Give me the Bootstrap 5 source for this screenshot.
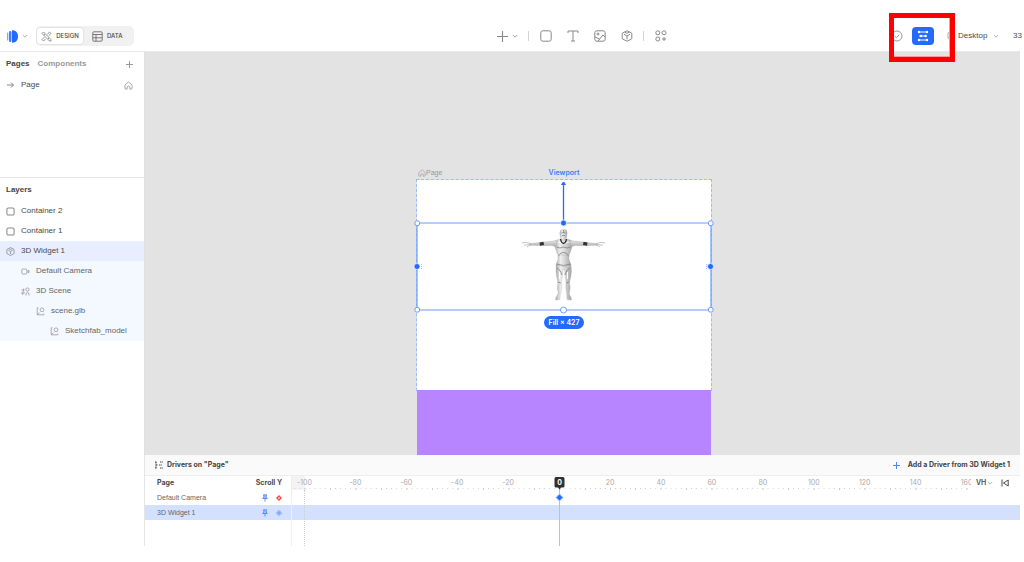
<!DOCTYPE html>
<html lang="en">
<head>
<meta charset="utf-8">
<meta name="viewport" content="width=device-width, initial-scale=1">
<title>Drivers on "Page"</title>
<link href="https://cdn.jsdelivr.net/npm/bootstrap@5.3.0/dist/css/bootstrap.min.css" rel="stylesheet">
<style>
  body { font-family: Inter, "Liberation Sans", sans-serif; font-size: 7px; line-height: 10px; color: #4a4a4a; background: #fff; }
  svg { display: block; flex: none; fill: none; stroke: currentColor; stroke-width: 1; }
  svg.solid { stroke: none; }
  svg.thin { stroke-width: .8; }
  svg.soft { color: #999; }
  svg.add { color: #4d85ff; }
  button, select { font: inherit; color: inherit; background: none; border: 0; padding: 0; }
  a { color: inherit; text-decoration: none; }
  select { appearance: none; }
  .plain { font-family: "Liberation Sans", sans-serif; font-size: 8px; }
  .app { min-height: 100vh; padding: 21px 4px 16px 0; }
  .topbar { display: grid; grid-template-columns: 144px 1fr auto 1fr; height: 31px; border-bottom: 1px solid #e8e8e8; }
  .brand { margin-left: 7px; }
  .modes { background: #f1f1f1; border-radius: 5px; height: 20px; width: 98px; font-size: 6px; font-weight: 500; }
  .modes button { height: 18px; color: #444; }
  .modes svg { color: #777; }
  .modes .active { width: 48px; background: #fff; border-radius: 4px; border: 1px solid #e2e2e2; }
  .tools { color: #888; }
  .tools button { margin-left: 15px; }
  .tools button:first-child { margin-left: 0; }
  .tools hr { width: 1px; height: 10px; margin: 0 -4px 0 10px; border: 0; background: #d4d4d4; opacity: 1; }
  .status { gap: 5px; }
  .drivers-btn { width: 22px; height: 18px; border-radius: 4px; background: #246bfd; color: #fff; }
  .callout { position: absolute; z-index: 5; inset: -14px -21px -17px -23px; border: 5px solid #f00; box-shadow: inset -1px -1px 0 #f99; pointer-events: none; }
  .zoom-level { width: 7px; margin-left: 9px; white-space: nowrap; }
  .side { width: 145px; border-right: 1px solid #e0e0e0; }
  .pages { height: 126px; border-bottom: 1px solid #e8e8e8; }
  .pages-head { padding: 7px 11px 6px 6px; }
  .strong { font-weight: 600; color: #444; }
  .faint { color: #999; }
  .layer { height: 20px; padding: 0 11px 0 6px; gap: 6px; }
  .layer svg { color: #888; }
  .picked { background: #e8eeff; }
  .child { background: #f4f8ff; color: #666; }
  .child svg { color: #999; }
  .lv1 { padding-left: 21px; } .lv2 { padding-left: 36px; } .lv3 { padding-left: 50px; }
  .canvas { background: #e3e3e3; }
  .artboard { position: absolute; left: 272px; top: 128px; bottom: 0; width: 294px; }
  .screen { height: 210px; background: #fff; outline: 1px dashed #9dbcff; }
  .purple { background: #b685ff; }
  .board-label { position: absolute; top: -12px; left: 1px; font-size: 7px; }
  .view-label { position: absolute; top: -12px; left: 0; right: 0; color: #3b7bff; font-weight: 600; }
  .scene { position: absolute; left: -5px; top: 0; }
  .size-tag { position: absolute; top: 136px; left: 127px; width: 40px; height: 13px; border-radius: 7px; background: #246bfd; color: #fff; font-weight: 600; }
  .panel { height: 91px; border-left: 1px solid #e5e5e5; margin-left: -1px; }
  .panel-head { height: 21px; background: #fafafa; border-bottom: 1px solid #eee; padding: 0 10px; font-weight: 700; color: #444; }
  .panel-body { height: 70px; }
  .names { width: 147px; border-right: 1px solid #eee; }
  .names table { width: 100%; border-collapse: collapse; }
  .names th, .names td { height: 15px; padding: 0; vertical-align: middle; }
  .names thead th { font-weight: 700; height: 14px; }
  .names tbody th { font-family: "Liberation Sans", sans-serif; font-weight: 400; color: #666; }
  .names th:first-child { padding-left: 12px; }
  .names th:last-child { text-align: right; padding-right: 9px; }
  .names .key { color: #4d85ff; width: 52px; padding-right: 9px; }
  .lane-on { background: #d3e0fe; }
  .lane { height: 15px; }
  .ruler { height: 14px; background: linear-gradient(90deg, #f3f3f3 13px, #fff 13px); clip-path: inset(0 0 -60px 0); position: relative; z-index: 1; }
  .ticks { display: grid; grid-template-columns: repeat(14, 1fr); margin: 0 28px 0 -13px; height: 15px; color: #aaa; }
  .ticks span { position: relative; text-align: center; padding-top: 2px; background: linear-gradient(90deg, #ccc 1px, transparent 1px) 0 12px / 10% 1px repeat-x, linear-gradient(90deg, #ccc 1px, transparent 1px) 0 12px / 50% 2px repeat-x; }
  .ticks .head { position: absolute; z-index: 2; left: 50%; top: 1px; margin-left: -5px; }
  .origin { position: absolute; left: 12px; top: 14px; bottom: 0; border-left: 1px dotted #ccc; }
  .needle { position: absolute; z-index: 1; left: 50%; top: 12px; height: 58px; width: 1px; background: #bcc0c8; }
  .units { position: absolute; z-index: 2; right: 0; top: 0; width: 49px; height: 14px; background: #fff; padding-left: 5px; }
  .units select { font-weight: 600; }
</style>
</head>
<body>
<svg width="0" height="0" class="position-absolute" aria-hidden="true">
  <symbol id="chev" viewBox="0 0 6 6"><path d="M.8 2 3 4.2 5.2 2" stroke-width=".8"/></symbol>
  <symbol id="plus" viewBox="0 0 10 10"><path d="M5 0v10M0 5h10"/></symbol>
  <symbol id="home" viewBox="0 0 10 10"><path d="M1 4.500 5 1l4 3.500V8q0 1-1 1H6.500V6.500Q5 5 3.500 6.500V9H2Q1 9 1 8z" stroke-width=".8"/></symbol>
  <symbol id="cube" viewBox="0 0 12 12"><path d="M6 .7 10.800 3.300v5.400L6 11.300 1.200 8.700V3.300zM3 4.200 6 6l3-1.800M6 6v3.500M3.800 2.200 6 3.300l2.200-1.100"/></symbol>
  <symbol id="box" viewBox="0 0 8 8"><rect x=".8" y=".8" width="6.400" height="6.400" rx="1.300" stroke-width=".9"/></symbol>
  <symbol id="mesh" viewBox="0 0 9 9"><path d="M2.500.8H1.200v7h6.600V6.500M1.200 7.800l2.200-2.200" stroke-width=".8"/><circle cx="6" cy="2.800" r="1.900" stroke-width=".8"/></symbol>
  <symbol id="pin" viewBox="0 0 6 8"><path d="M1.500.8h3L4 3l1.300 1.500H.7L2 3zM3 4.500v3" fill="#a9c3ff" stroke-width=".9"/></symbol>
</svg>

<div class="app d-flex flex-column">
  <header class="topbar">
    <div class="d-flex align-items-center">
      <button class="brand d-flex align-items-center" aria-label="Menu">
        <svg class="solid" width="11" height="13" viewBox="0 0 11 13"><path d="M5 .3c4 0 6 2.700 6 6.200s-2 6.200-6 6.200z" fill="#246bfd"/><rect x="2" y="1" width="2.400" height="11" rx="1.200" fill="#3f80ff"/><rect x="0" y="2.500" width="1.300" height="8" rx=".6" fill="#7ba8ff"/></svg>
        <svg width="6" height="6" class="soft ms-1 me-1"><use href="#chev"/></svg>
      </button>
      <div class="modes d-flex align-items-center ms-1">
        <button class="active d-flex align-items-center justify-content-center gap-1">
          <svg class="thin" width="11" height="11" viewBox="0 0 11 11"><path d="M1 2.500 2.500 1 10 8.500v1.500H8.500zM10 2.500 8.500 1 6.300 3.200M7.800 4.700 10 2.500M4.700 7.800 2.500 10 1 8.500l2.200-2.200M3 4l1-1M7 8l1-1"/></svg>DESIGN
        </button>
        <button class="d-flex align-items-center gap-1 ps-2">
          <svg width="11" height="11" viewBox="0 0 11 11"><rect x=".8" y=".8" width="9.400" height="9.400" rx="1"/><path d="M.8 3.500h9.400M.8 6.800h9.400M4 3.500v6.700"/></svg>DATA
        </button>
      </div>
    </div>
    <div></div>
    <div class="tools d-flex align-items-center">
      <button class="d-flex align-items-center" aria-label="Add"><svg width="11" height="11" class="me-1"><use href="#plus"/></svg><svg width="6" height="6"><use href="#chev"/></svg></button>
      <hr>
      <button aria-label="Container"><svg width="12" height="12" viewBox="0 0 12 12"><rect x=".8" y=".8" width="10.400" height="10.400" rx="2"/></svg></button>
      <button aria-label="Text"><svg width="12" height="12" viewBox="0 0 12 12"><path d="M1 3V1h10v2M6 1v10M4 11h4"/></svg></button>
      <button aria-label="Image"><svg width="12" height="12" viewBox="0 0 12 12"><rect x=".8" y=".8" width="10.400" height="10.400" rx="2"/><circle cx="4" cy="4" r="1"/><path d="M4 11 9 5l2 2M1 7l4.500 2"/></svg></button>
      <button aria-label="3D widget"><svg width="12" height="12"><use href="#cube"/></svg></button>
      <hr>
      <button aria-label="Components"><svg width="12" height="12" viewBox="0 0 12 12"><circle cx="2.800" cy="2.800" r="2"/><circle cx="9" cy="2.800" r="2"/><circle cx="2.800" cy="9" r="2"/><path d="M9 7v4M7 9h4"/></svg></button>
    </div>
    <div class="status plain d-flex align-items-center justify-content-end">
      <button class="me-1" aria-label="Saved"><svg class="soft" width="12" height="12" viewBox="0 0 12 12"><circle cx="6" cy="6" r="5"/><path d="M3.800 6.200 5.400 7.700 8.200 4.800"/></svg></button>
      <div class="position-relative">
        <button class="drivers-btn d-flex align-items-center justify-content-center" aria-label="Drivers"><svg width="12" height="12" viewBox="0 0 12 12"><path d="M2.500 2h7M2 6h8M2.500 10h7"/><g fill="#fff" stroke="none"><circle cx="2" cy="2" r="1.200"/><circle cx="10" cy="2" r="1.200"/><circle cx="4" cy="6" r="1.200"/><circle cx="8.500" cy="6" r="1.200"/><circle cx="2" cy="10" r="1.200"/><circle cx="10" cy="10" r="1.200"/></g></svg></button>
        <div class="callout"></div>
      </div>
      <label for="device" class="ps-1 ms-1" aria-label="Device"><svg width="6" height="9" viewBox="0 0 6 9" class="soft thin"><path d="M6 .8H1v5.500h5M2 8.300h4"/></svg></label>
      <select id="device"><option>Desktop</option></select>
      <svg width="6" height="6" class="soft"><use href="#chev"/></svg>
      <span class="zoom-level">33</span>
    </div>
  </header>

  <div class="d-flex flex-grow-1">
    <aside class="side plain d-flex flex-column">
      <section class="pages">
        <div class="pages-head d-flex align-items-center">
          <span class="strong">Pages</span><a href="#" class="faint fw-semibold ms-2">Components</a>
          <button class="ms-auto" aria-label="Add page"><svg width="7" height="7" viewBox="0 0 7 7" class="soft"><path d="M3.500 0v7M0 3.500h7"/></svg></button>
        </div>
        <div class="layer d-flex align-items-center">
          <svg width="9" height="8" viewBox="0 0 9 8"><path d="M1 4h6.500M5 1.500 7.500 4 5 6.500"/></svg><a href="#">Page</a>
          <svg width="9" height="9" class="ms-auto"><use href="#home"/></svg>
        </div>
      </section>
      <div class="strong pages-head">Layers</div>
      <div class="layer d-flex align-items-center"><svg width="9" height="9"><use href="#box"/></svg><span>Container 2</span></div>
      <div class="layer d-flex align-items-center"><svg width="9" height="9"><use href="#box"/></svg><span>Container 1</span></div>
      <div class="layer d-flex align-items-center picked"><svg width="9" height="9"><use href="#cube"/></svg><span>3D Widget 1</span></div>
      <div class="layer d-flex align-items-center child lv1"><svg class="thin" width="9" height="9" viewBox="0 0 9 9"><rect x=".8" y="2" width="5" height="5" rx="1"/><path d="M7 3.500h1v2H7z"/></svg><span>Default Camera</span></div>
      <div class="layer d-flex align-items-center child lv1"><svg class="thin" width="9" height="9" viewBox="0 0 9 9"><circle cx="6.500" cy="2.500" r="1.600"/><path d="M.5 3h3M0 6h4M2.800 1.500 1.500 8M5 8.500V6.500l1.500-1L8 6.500v2"/></svg><span>3D Scene</span></div>
      <div class="layer d-flex align-items-center child lv2"><svg width="9" height="9"><use href="#mesh"/></svg><span>scene.glb</span></div>
      <div class="layer d-flex align-items-center child lv3"><svg width="9" height="9"><use href="#mesh"/></svg><span>Sketchfab_model</span></div>
    </aside>

    <div class="d-flex flex-column flex-grow-1">
      <main class="canvas flex-grow-1 position-relative">
        <div class="artboard d-flex flex-column">
          <div class="board-label plain faint d-flex align-items-center"><svg width="8" height="8"><use href="#home"/></svg>Page</div>
          <div class="view-label text-center">Viewport</div>
          <div class="screen"></div>
          <div class="purple flex-grow-1"></div>
          <svg class="scene" width="304" height="140" viewBox="-5 0 304 140">
            <defs>
              <linearGradient id="body"><stop offset="0" stop-color="#aaa"/><stop offset=".3" stop-color="#eee"/><stop offset=".6" stop-color="#d4d4d4"/><stop offset="1" stop-color="#a4a4a4"/></linearGradient>
              <linearGradient id="arm" x2="0" y2="1"><stop offset="0" stop-color="#e4e4e4"/><stop offset="1" stop-color="#aaa"/></linearGradient>
            </defs>
            <g stroke="#aaa" stroke-width=".3" fill="url(#body)">
              <path d="M139 84.500q7.500 2 15 0l.5 7q-.5 6-2 11 1.500 5-.2 11l-2.600.3q-1.500-6-.7-11.300-.8-6-1.500-13h-1.500q-.7 7-1.500 13 .8 5.300-.7 11.300l-2.600-.3q-1.700-6-.2-11-1.500-5-2-11z"/>
              <path d="M140.800 73h11.400l-.2 6 2 6q-7.500 3-15 0l2-6z"/>
              <path d="M137.500 61q4-2.500 9-2.500t9 2.500l-.8 7-2 6q-6.200 3-12.400 0l-2-6z"/>
              <path d="M141 113.500l2.200.3q.3 3.500-.5 6l-4 .3q-.6-2 1-4zM152 113.500l-2.200.3q-.3 3.500.5 6l4 .3q.6-2-1-4z"/>
              <path d="M142.800 53q0-4 3.700-4t3.700 4l-.5 4q-1 3-3.200 3t-3.200-3z"/>
              <g fill="url(#arm)"><path d="M140 60.500l-7 .8-10 1.200-10 1v1.800l14 .4 8-.2 4 1.500zM153 60.500l7 .8 10 1.200 10 1v1.800l-14 .4-8-.2-4 1.500z"/></g>
            </g>
            <path d="M114 63.500l-5-1-4 .3M114 64.300l-7 1M114 64.800l-4 2M179 63.500l5-1 4 .3M179 64.300l7 1M179 64.800l4 2" stroke="#aaa" stroke-width=".7"/>
            <path d="M122.500 62.500l4-.7.5 3.200-4 .7zM170.500 62.500l-4-.7-.5 3.200 4 .7z" fill="#333" stroke="none"/>
            <path d="M143.500 59q.5 3.500 3 4.500 2.500-1 3-4.500" stroke="#222" stroke-width="1.200"/>
            <path d="M144.500 53q2-1 4 0M145 55.500h3M146.500 50v3M139.500 67q3.500 2 7 0 3.500 2 7 0M141.500 76q2-4 5-3.500 3-.5 5 3.500M139.500 84q7 3 14 0M140 88q4 2 5 7M153 88q-4 2-5 7M140.500 102l3.500 1M152.500 102l-3.500 1" stroke="#777" stroke-width=".7"/>
            <path d="M141 62.500q2-2 3 1M149.500 63.500q1-3 3-1M142.500 92v7M150.500 92v7" stroke="#fff" stroke-width="1"/>
            <g stroke="#246bfd"><path d="M146.500 2v40" stroke-width="1.300"/><path d="M144.500 4.500l2-2.500 2 2.500z" fill="#246bfd"/>
              <path d="M0 43h294M0 43v87M294 43v87M0 130h294" stroke="#6c9cff" stroke-width="1.200"/></g>
            <g fill="#fff" stroke="#6c9cff"><rect x="-2" y="41" width="4.500" height="4.500" rx="1.500"/><rect x="291.500" y="41" width="4.500" height="4.500" rx="1.500"/><rect x="-2" y="127.500" width="4.500" height="4.500" rx="1.500"/><rect x="291.500" y="127.500" width="4.500" height="4.500" rx="1.500"/><circle cx="146.500" cy="130" r="3"/></g>
            <g fill="#246bfd" stroke="#fff" stroke-width=".7"><circle cx="146.500" cy="43" r="3"/><circle cx="0" cy="86.500" r="3"/><circle cx="293.500" cy="86.500" r="3"/></g>
            <path d="M4.500 84v6M289.500 84v6" stroke="#9dbcff" stroke-dasharray="1 1"/>
          </svg>
          <div class="size-tag d-flex align-items-center justify-content-center">Fill × 427</div>
        </div>
      </main>

      <section class="panel">
        <div class="panel-head d-flex align-items-center">
          <svg width="8" height="8" viewBox="0 0 8 8" class="me-1"><path d="M0 1h2M4 4h3M0 7h2M1 1v6M5 1h3M5 7h3M1 4h2" stroke-dasharray="1.500 .7"/></svg>
          <span>Drivers on "Page"</span>
          <button class="ms-auto d-flex align-items-center"><svg width="7" height="7" class="add me-2" viewBox="0 0 7 7"><path d="M3.500 0v7M0 3.500h7"/></svg>Add a Driver from 3D Widget 1</button>
        </div>
        <div class="panel-body d-flex">
          <div class="names">
            <table>
              <thead><tr><th scope="col">Page</th><th scope="col">Scroll Y</th></tr></thead>
              <tbody>
                <tr><th scope="row">Default Camera</th><td class="key"><div class="d-flex align-items-center gap-2 justify-content-end"><svg width="6" height="8"><use href="#pin"/></svg><svg width="6" height="6" viewBox="0 0 6 6"><path d="M3 1 5 3 3 5 1 3z" stroke="#f44" stroke-width="1.400"/></svg></div></td></tr>
                <tr class="lane-on"><th scope="row">3D Widget 1</th><td class="key"><div class="d-flex align-items-center gap-2 justify-content-end"><svg width="6" height="8"><use href="#pin"/></svg><svg width="6" height="6" viewBox="0 0 6 6"><path d="M3 .5 5.500 3 3 5.500.5 3zM3 2v2M2 3h2" stroke-width=".8"/></svg></div></td></tr>
              </tbody>
            </table>
          </div>
          <div class="flex-grow-1 position-relative">
            <div class="ruler">
              <div class="ticks">
                <span>-100</span><span>-80</span><span>-60</span><span>-40</span><span>-20</span>
                <span><svg class="head solid" width="11" height="28" viewBox="0 0 11 28"><path d="M2 0h7q1.500 0 1.500 1.500V9q0 1-1 1.500H7L5.500 12.500 4 10.500H1.500Q.5 10 .5 9V1.500Q.5 0 2 0z" fill="#303030"/><text x="5.500" y="8" text-anchor="middle" font-size="7" font-weight="700" fill="#fff">0</text><path d="M5.500 17 9 20.500 5.500 24 2 20.500z" fill="#246bfd" stroke="#a9c3ff"/></svg><i class="needle"></i></span>
                <span>20</span><span>40</span><span>60</span><span>80</span><span>100</span><span>120</span><span>140</span><span>160</span>
              </div>
            </div>
            <div class="lane"></div>
            <div class="lane lane-on"></div>
            <div class="origin"></div>
            <div class="units d-flex align-items-center">
              <select aria-label="Unit"><option>VH</option></select>
              <svg width="6" height="6" class="soft me-2"><use href="#chev"/></svg>
              <button aria-label="Go to start"><svg width="8" height="8" viewBox="0 0 8 8"><path d="M1 .5v7M7.200 1v6L2.500 4z"/></svg></button>
            </div>
          </div>
        </div>
      </section>
    </div>
  </div>
</div>
<script src="https://cdn.jsdelivr.net/npm/bootstrap@5.3.0/dist/js/bootstrap.bundle.min.js"></script>
</body>
</html>
